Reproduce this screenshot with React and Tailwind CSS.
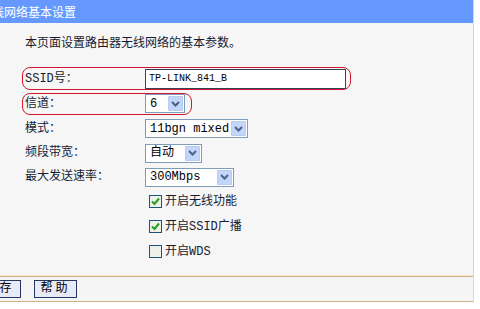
import React from "react";

const Chevron = () => (
  <svg width="9" height="6" viewBox="0 0 9 6">
    <path d="M1 1 L4.5 4.5 L8 1" fill="none" stroke="#4a5f8c" strokeWidth="2" />
  </svg>
);

function Select({ value, className }) {
  return (
    <div className={`flex h-[19px] items-center border border-[#7f9db9] bg-white ${className}`}>
      <span className="flex-1 whitespace-nowrap pl-[4px] text-[12px] leading-[14px] text-black">{value}</span>
      <span className="mr-[1px] flex h-[15px] w-[15px] items-center justify-center rounded-[1px] border border-[#b8cbf2] bg-[#c4d5fa]">
        <Chevron />
      </span>
    </div>
  );
}

function Check({ checked, label }) {
  return (
    <div className="flex items-center">
      <span className="ml-[4px] flex h-[13px] w-[13px] items-center justify-center border border-[#1c5180] bg-[#eef0ea]">
        {checked && (
          <svg width="9" height="9" viewBox="0 0 9 9">
            <path d="M1 4.5 L3.5 7 L8 1.5" fill="none" stroke="#21a121" strokeWidth="2" />
          </svg>
        )}
      </span>
      <span className="ml-[3px] text-[12px] leading-[14px]">{label}</span>
    </div>
  );
}

const Row = ({ label, children, h }) => (
  <div className={`flex items-center ${h}`}>
    <span className="w-[120px] shrink-0 text-[12px] leading-[14px]">{label}</span>
    {children}
  </div>
);

export default function App() {
  return (
    <div className="h-[309px] w-[480px] overflow-hidden bg-white font-['Liberation_Mono','Noto_Sans_CJK_SC',monospace] text-[#161c30]">
      <div className="w-[474px] border-r border-[#ecd3ab]">
        {/* title */}
        <div className="flex h-[23px] items-center overflow-hidden bg-[#6699ff]">
          <span className="ml-[-8px] whitespace-nowrap font-['Noto_Sans_CJK_SC',sans-serif] text-[12px] leading-[14px] text-white">
            线网络基本设置
          </span>
        </div>

        {/* body */}
        <div className="relative h-[252px] bg-[#f6f6f6] pl-[25px] pt-[14px]">
          <p className="h-[14px] text-[12px] leading-[14px]">本页面设置路由器无线网络的基本参数。</p>

          <div className="mt-[16px]">
            <Row label="SSID号：" h="h-[24px]">
              <div className="flex h-[20px] w-[201px] items-center border border-[#34445c] bg-white pl-[3px] text-[10px] leading-[12px] text-black">
                TP-LINK_841_B
              </div>
            </Row>
            <Row label="信道：" h="h-[25px]">
              <Select value="6" className="w-[40px]" />
            </Row>
            <Row label="模式：" h="h-[25px]">
              <Select value="11bgn mixed" className="w-[103px]" />
            </Row>
            <Row label="频段带宽：" h="h-[24px]">
              <Select value="自动" className="w-[57px]" />
            </Row>
            <Row label="最大发送速率：" h="h-[24px]">
              <Select value="300Mbps" className="w-[89px]" />
            </Row>
            <Row label="" h="h-[25px]">
              <Check checked label="开启无线功能" />
            </Row>
            <Row label="" h="h-[25px]">
              <Check checked label="开启SSID广播" />
            </Row>
            <Row label="" h="h-[25px]">
              <Check label="开启WDS" />
            </Row>
          </div>

          {/* red annotation outlines */}
          <div className="absolute left-[22px] top-[44px] h-[23px] w-[329px] rounded-[8px] border-[1.5px] border-[#d3142e]" />
          <div className="absolute left-[22px] top-[70px] h-[22px] w-[170px] rounded-[8px] border-[1.5px] border-[#d3142e]" />
        </div>

        {/* buttons */}
        <div className="border-t border-[#fbe7c9]">
          <div className="flex h-[26px] items-center gap-[13px] border-b border-t border-[#cdb08a] bg-[#f5f5f5]">
            <button className="ml-[-22px] h-[18px] w-[43px] border border-[#27375f] bg-[#e6ebf7] text-[12px] leading-[14px] tracking-[3px] text-black">
              保存
            </button>
            <button className="h-[18px] w-[43px] border border-[#27375f] bg-[#e6ebf7] text-[12px] leading-[14px] tracking-[3px] text-black">
              帮助
            </button>
          </div>
        </div>
      </div>
    </div>
  );
}
